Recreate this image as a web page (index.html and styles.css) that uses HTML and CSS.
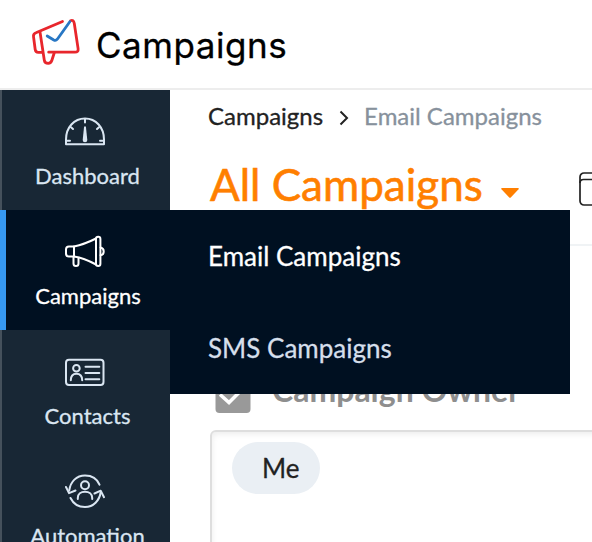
FILE: index.html
```html
<!DOCTYPE html>
<html lang="en">
<head>
<meta charset="utf-8">
<title>Campaigns</title>
<link rel="stylesheet" href="styles.css">
</head>
<body>
<header class="topbar">
  <svg class="logo" viewBox="0 0 52 52" fill="none" stroke-width="2.8" stroke-linecap="round" stroke-linejoin="round">
    <g stroke="#e8262c">
      <path d="M32.5 6.5 6.5 17.5Q3 18.8 3.5 21.5L5.2 34.5Q5.6 37.5 8.5 37.4H12"/>
      <path d="M10 17 14.3 45.2Q14.8 48.3 18.2 48.3Q21 48.2 21.8 45.5L24.2 38"/>
      <path d="M18.7 37.2H45Q48.6 37.2 48.1 33.6L44.3 8.5Q43.5 4.3 40.5 5.7"/>
    </g>
    <path stroke="#2877c4" d="M17.2 21 23.8 25Q25.8 26.1 27.3 24.2L39.8 6.7"/>
  </svg>
  <span class="product">Campaigns</span>
</header>
<div class="shell">
  <nav class="sidebar">
    <a class="item">
      <svg class="icon" viewBox="0 0 40 40">
        <path d="M1 32.3V27.5C1 15.5 9 6.5 20 6.5S39 15.5 39 27.5V32.3Z"/>
        <path d="M20 7V10.5M6 15.2 8 17M34 15.2 32 17M2 28.7H5M38 28.7H35"/>
        <path class="solid" d="M19.1 14.5H20.9L22.3 28A2.3 2.3 0 0 1 17.7 28Z"/>
      </svg>
      <span class="label">Dashboard</span>
    </a>
    <a class="item active">
      <svg class="icon" viewBox="0 0 40 40">
        <path d="M9 14.5H4Q1 14.5 1 17.5V21.5Q1 24.5 4 24.5H9Z"/>
        <path d="M9 14.5Q19 12.5 31 6.5M9 24.5Q19 26 31 32.5"/>
        <rect x="31" y="4.8" width="4.4" height="29.2" rx="2.2"/>
        <path d="M8.5 25V31.5Q8.5 34 11 34T13.5 31.5V26M35.6 15.5A4 4 0 0 1 35.6 23.3"/>
      </svg>
      <span class="label">Campaigns</span>
    </a>
    <a class="item">
      <svg class="icon" viewBox="0 0 40 40">
        <rect x="1" y="7.8" width="37.5" height="25.2" rx="3"/>
        <circle cx="11.4" cy="16.2" r="3.3"/>
        <path d="M5.8 28.3C5.8 24.5 7.5 21.7 11.4 21.7S17.2 24.5 17.2 28.3M20.5 14.8H34.3M20.5 20.9H34.3M20.5 27.2H34.3"/>
      </svg>
      <span class="label">Contacts</span>
    </a>
    <a class="item">
      <svg class="icon" viewBox="0 3.5 40 40">
        <circle cx="20" cy="16.8" r="4"/>
        <path d="M12.8 30.5V29.5C12.8 25.5 16 23.3 20 23.3S27.2 25.5 27.2 29.5V30.5"/>
        <path d="M34.5 16.2C32.2 10.5 26.8 7 20 7C11.5 7 5.5 13 4.2 22M5.5 29.5C8.2 35 13.2 38.5 20 38.5C28.5 38.5 34.5 32 35.7 23.5"/>
        <path d="M1 18.5 4 24.6 10.5 22M29.5 25 35.7 22.2 39 28.7"/>
      </svg>
      <span class="label">Automation</span>
    </a>
  </nav>
  <main class="content">
    <div class="crumbs">
      <span>Campaigns</span>
      <svg class="chevron" viewBox="0 0 10 16"><path d="M1.5 1.5 8 8 1.5 14.5"/></svg>
      <span class="here">Email Campaigns</span>
    </div>
    <div class="heading">
      <h1 class="title">All Campaigns</h1>
      <svg class="caret" viewBox="0 0 18 10"><path d="M1 0H17Q18.4 .3 17.5 1.3L10 9.3Q9 10.3 8 9.3L.5 1.3Q-.4 .3 1 0Z"/></svg>
      <svg class="panel" viewBox="0 0 36 36"><rect x="1" y="1" width="40" height="32" rx="4"/><path d="M1 11Q1 7.5 4.5 7.5H36"/></svg>
    </div>
    <div class="filter">
      <svg class="check" viewBox="0 0 35 35"><rect width="35" height="35" rx="4"/><path d="M4.5 16.5 13.5 24.5 28 10"/></svg>
      <span class="filter-name">Campaign Owner</span>
    </div>
    <div class="box"><span class="chip">Me</span></div>
  </main>
  <div class="flyout">
    <a class="option selected">Email Campaigns</a>
    <a class="option">SMS Campaigns</a>
  </div>
</div>
</body>
</html>
```
FILE: styles.css
```css
* { box-sizing: border-box; }
html, body { height: 100%; }
body {
  margin: 0;
  overflow: hidden;
  background: #fff;
  color: #222;
  font-family: Lato, "Liberation Sans", sans-serif;
  -webkit-text-stroke: 0.3px;
}
.topbar {
  display: flex;
  height: 90px;
  padding: 15px 0 0 30px;
  border-bottom: 2px solid #ededed;
}
.logo { width: 52px; height: 52px; }
.product {
  margin-left: 14px;
  color: #000;
  font-family: Inter, sans-serif;
  font-size: 35px;
  line-height: 60px;
  letter-spacing: 0.55px;
}
.shell { position: relative; display: flex; height: 452px; }
.sidebar {
  flex: none;
  width: 170px;
  overflow: hidden;
  background: #182735;
}
.item {
  display: flex;
  flex-direction: column;
  align-items: center;
  height: 120px;
  padding: 22px 0 0 3px;
  border-left: 2px solid #45515c;
  color: #dae6f2;
}
.item.active {
  padding-left: 0;
  border-left: 6px solid #3698f0;
  background: #001021;
  color: #fff;
}
.icon {
  width: 40px;
  height: 40px;
  margin-right: 6px;
  fill: none;
  stroke: currentColor;
  stroke-width: 2;
  stroke-linecap: round;
  stroke-linejoin: round;
}
.icon .solid { fill: currentColor; stroke: none; }
.label { margin-top: 10px; font-size: 22px; line-height: 27px; white-space: nowrap; }
.content { flex: none; width: 422px; padding: 11px 0 0 40px; overflow: hidden; }
.crumbs {
  display: flex;
  align-items: center;
  margin-left: -2px;
  font-size: 24px;
  line-height: 30px;
  white-space: nowrap;
}
.chevron { width: 10px; height: 16px; margin: 4px 15px 0 16px; fill: none; stroke: #222; stroke-width: 2; }
.here { color: #87919c; }
.heading { display: flex; height: 89px; margin-top: 26px; border-bottom: 2px solid #f0f3f5; white-space: nowrap; }
.title { margin: 0; color: #ff7f00; font-size: 44px; line-height: 54px; font-weight: 400; -webkit-text-stroke: 0.6px; }
.caret { flex: none; width: 18px; height: 10px; margin: 31px 60px 0 18px; fill: #ff7f00; }
.panel { flex: none; width: 36px; height: 36px; margin-top: 15px; fill: none; stroke: #222; stroke-width: 1.7; }
.filter { display: flex; height: 57px; margin-top: 127px; padding-left: 5px; }
.check { width: 36px; height: 35px; margin-top: 5px; fill: #999; }
.check path { fill: none; stroke: #fff; stroke-width: 3.5; }
.filter-name { margin-left: 21px; color: #8e8e8e; font-size: 32px; line-height: 34px; font-weight: 700; white-space: nowrap; -webkit-text-stroke: 0; }
.box {
  width: 400px;
  height: 130px;
  padding: 10px 20px;
  border: 2px solid #dedede;
  border-radius: 6px;
  box-shadow: inset 0 2px 6px #00000014;
}
.chip {
  display: inline-block;
  width: 88px;
  height: 52px;
  padding-left: 30px;
  border-radius: 26px;
  background: #eaeff4;
  font-size: 26px;
  line-height: 53px;
}
.flyout {
  position: absolute;
  left: 170px;
  top: 120px;
  width: 400px;
  height: 184px;
  background: #001021;
}
.option { display: block; height: 92px; padding-left: 38px; color: #d5dfeb; font-size: 26px; line-height: 93px; }
.option.selected { color: #fff; }
```
